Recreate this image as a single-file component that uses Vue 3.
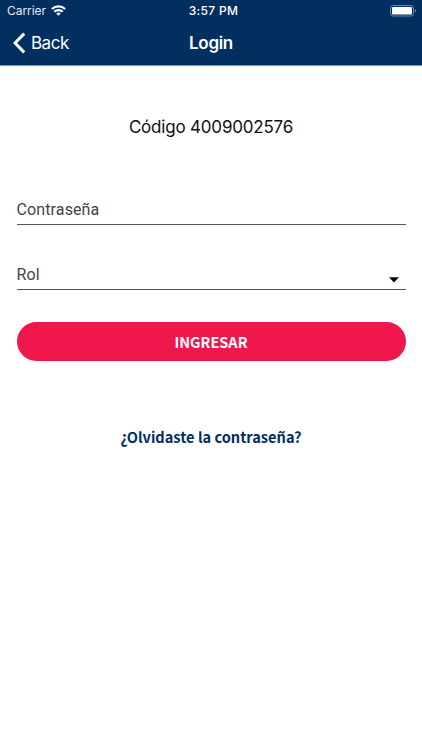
<template>
  <div class="login-screen">
    <header class="header">
      <div class="status-bar">
        <div class="status-bar__left">
          <span class="status-bar__carrier">Carrier</span>
          <svg class="status-bar__wifi" width="15" height="11" viewBox="0 0 15 11" aria-hidden="true">
            <g fill="none" stroke="#fff" stroke-width="2.1">
              <path d="M0.9 4.1A9.4 9.4 0 0 1 14.1 4.1" />
              <path d="M3.3 6.8A6 6 0 0 1 11.7 6.8" />
            </g>
            <path d="M7.5 10.7L5.3 8.6A3.1 3.1 0 0 1 9.7 8.6Z" fill="#fff" />
          </svg>
        </div>
        <span class="status-bar__time">{{ time }}</span>
        <svg class="status-bar__battery" width="27" height="12" viewBox="0 0 27 12" aria-hidden="true">
          <rect x="0.5" y="0.5" width="23" height="10.5" rx="2.6" fill="none" stroke="#6e87a5" />
          <rect x="2" y="2" width="20" height="7.5" rx="1.2" fill="#fff" />
          <path d="M24.8 4V7.6Q26.2 7 26.2 5.8T24.8 4Z" fill="#6e87a5" />
        </svg>
      </div>

      <nav class="nav-bar">
        <button type="button" class="nav-bar__back">
          <svg width="13" height="22" viewBox="0 0 13 22" aria-hidden="true">
            <path d="M11.2 1.6L2 11L11.2 20.4" fill="none" stroke="#fff" stroke-width="3" />
          </svg>
          <span class="nav-bar__back-label">Back</span>
        </button>
        <h1 class="nav-bar__title">Login</h1>
      </nav>
    </header>

    <main class="content">
      <p class="content__code">Código {{ code }}</p>

      <div v-for="field in fields" :key="field.label" class="field">
        <span class="field__label">{{ field.label }}</span>
        <svg v-if="field.select" class="field__arrow" width="10" height="6" viewBox="0 0 10 6" aria-hidden="true">
          <path d="M0 0.2H10L5 5.4Z" fill="#000" />
        </svg>
      </div>

      <button type="button" class="submit"><span class="submit__label">INGRESAR</span></button>
      <a class="forgot">¿Olvidaste la contraseña?</a>
    </main>
  </div>
</template>

<script setup>
const time = '3:57 PM'
const code = '4009002576'

const fields = [
  { label: 'Contraseña', select: false },
  { label: 'Rol', select: true }
]
</script>

<style>
body {
  margin: 0;
  background: #fff;
}
</style>

<style scoped>
.login-screen {
  box-sizing: border-box;
  width: 100%;
  min-height: 750px;
  background: #fff;
  font-family: Inter, sans-serif;
}

.header {
  box-sizing: border-box;
  height: 66px;
  background: #012f60;
  border-bottom: 1px solid #8397ae;
  color: #fff;
}

.status-bar {
  display: grid;
  grid-template-columns: 1fr auto 1fr;
  align-items: center;
  height: 21px;
  padding: 0 5px 0 7px;
}

.status-bar__left {
  display: flex;
  align-items: center;
  gap: 5px;
}

.status-bar__carrier {
  font-size: 12px;
  letter-spacing: -0.05px;
  color: #e6ebf0;
}

.status-bar__time {
  padding-left: 3px;
  font-size: 12px;
  font-weight: 500;
  letter-spacing: 0.3px;
}

.status-bar__battery {
  justify-self: end;
}

.nav-bar {
  display: grid;
  grid-template-columns: 1fr auto 1fr;
  align-items: center;
  height: 44px;
  padding: 0 13px;
}

.nav-bar__back {
  display: flex;
  align-items: center;
  gap: 5px;
  padding: 0;
  border: 0;
  background: none;
  color: #fff;
  font: inherit;
}

.nav-bar__back-label {
  font-size: 17px;
  letter-spacing: -0.5px;
}

.nav-bar__title {
  margin: 0;
  font-size: 17px;
  font-weight: 600;
  letter-spacing: -0.3px;
}

.content {
  display: flex;
  flex-direction: column;
  padding: 49px 16.5px 0;
}

.content__code {
  margin: 0 0 61px;
  line-height: 24px;
  font-size: 17px;
  letter-spacing: -0.2px;
  text-align: center;
  color: #111;
}

.field {
  box-sizing: border-box;
  display: flex;
  justify-content: space-between;
  align-items: flex-end;
  height: 25px;
  margin-bottom: 40px;
  border-bottom: 1px solid #555;
}

.field__label {
  height: 23px;
  line-height: 18px;
  font-family: Roboto, sans-serif;
  font-size: 16px;
  letter-spacing: 0.12px;
  color: #444;
}

.field__arrow {
  margin: 0 6.5px 6px 0;
}

.submit {
  height: 39px;
  margin: -8px 0 64px;
  padding: 0;
  border: 0;
  border-radius: 20px;
  background: #ef174c;
  color: #fff;
}

.submit__label {
  font-family: "Noto Sans CJK SC", sans-serif;
  font-size: 14.5px;
  font-weight: 700;
}

.forgot {
  line-height: 24px;
  font-family: "Noto Sans CJK SC", sans-serif;
  font-size: 14.6px;
  font-weight: 700;
  text-align: center;
  color: #012f60;
}
</style>
